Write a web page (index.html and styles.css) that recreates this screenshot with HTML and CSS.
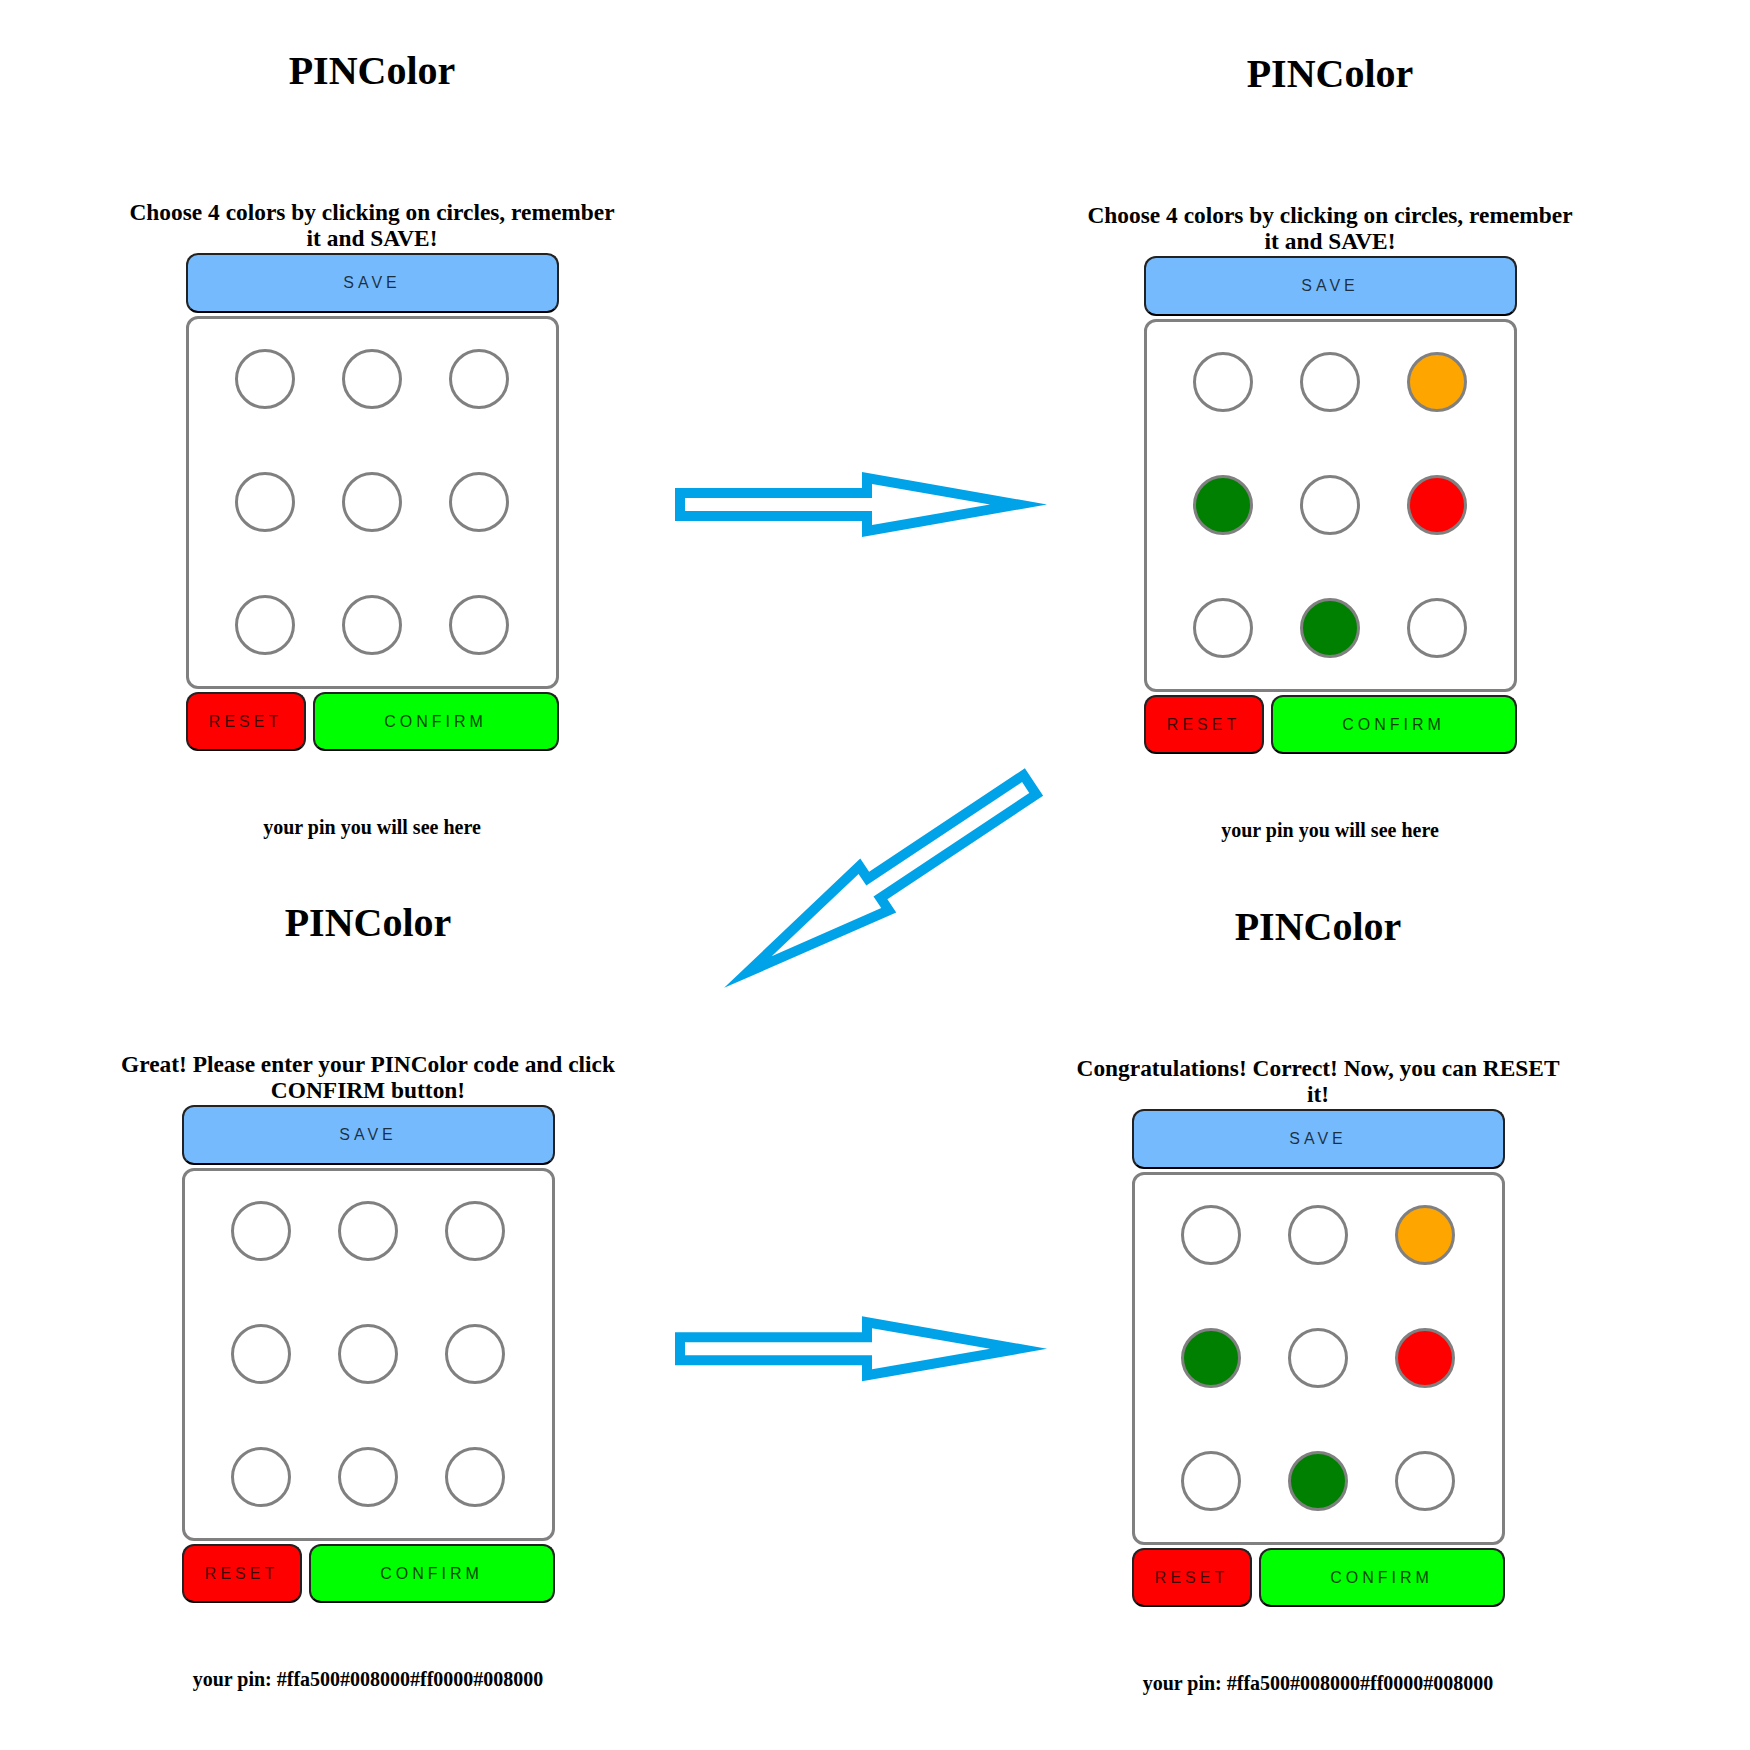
FILE: index.html
```html
<!DOCTYPE html>
<html>
<head>
  <meta charset="utf-8" />
  <title>PINColor</title>
  <link rel="stylesheet" href="styles.css">
</head>
<body>
  <div class="board">
    <div class="panel">
      <h1 class="title">PINColor</h1>
      <h3 class="hint">Choose 4 colors by clicking on circles, remember it and SAVE!</h3>
      <button type="button" class="btn save">SAVE</button>
      <div class="pad">
        <span class="dot"></span><span class="dot"></span><span class="dot"></span>
        <span class="dot"></span><span class="dot"></span><span class="dot"></span>
        <span class="dot"></span><span class="dot"></span><span class="dot"></span>
      </div>
      <div class="controls">
        <button type="button" class="btn reset">RESET</button>
        <button type="button" class="btn confirm">CONFIRM</button>
      </div>
      <p class="pin">your pin you will see here</p>
    </div>

    <div class="panel panel-tr">
      <h1 class="title">PINColor</h1>
      <h3 class="hint">Choose 4 colors by clicking on circles, remember it and SAVE!</h3>
      <button type="button" class="btn save">SAVE</button>
      <div class="pad">
        <span class="dot"></span><span class="dot"></span><span class="dot orange"></span>
        <span class="dot green"></span><span class="dot"></span><span class="dot red"></span>
        <span class="dot"></span><span class="dot green"></span><span class="dot"></span>
      </div>
      <div class="controls">
        <button type="button" class="btn reset">RESET</button>
        <button type="button" class="btn confirm">CONFIRM</button>
      </div>
      <p class="pin">your pin you will see here</p>
    </div>

    <div class="panel panel-bl">
      <h1 class="title">PINColor</h1>
      <h3 class="hint">Great! Please enter your PINColor code and click CONFIRM button!</h3>
      <button type="button" class="btn save">SAVE</button>
      <div class="pad">
        <span class="dot"></span><span class="dot"></span><span class="dot"></span>
        <span class="dot"></span><span class="dot"></span><span class="dot"></span>
        <span class="dot"></span><span class="dot"></span><span class="dot"></span>
      </div>
      <div class="controls">
        <button type="button" class="btn reset">RESET</button>
        <button type="button" class="btn confirm">CONFIRM</button>
      </div>
      <p class="pin">your pin: #ffa500#008000#ff0000#008000</p>
    </div>

    <div class="panel panel-br">
      <h1 class="title">PINColor</h1>
      <h3 class="hint">Congratulations! Correct! Now, you can RESET it!</h3>
      <button type="button" class="btn save">SAVE</button>
      <div class="pad">
        <span class="dot"></span><span class="dot"></span><span class="dot orange"></span>
        <span class="dot green"></span><span class="dot"></span><span class="dot red"></span>
        <span class="dot"></span><span class="dot green"></span><span class="dot"></span>
      </div>
      <div class="controls">
        <button type="button" class="btn reset">RESET</button>
        <button type="button" class="btn confirm">CONFIRM</button>
      </div>
      <p class="pin">your pin: #ffa500#008000#ff0000#008000</p>
    </div>

    <!-- arrows between the steps -->
    <svg class="arrows" width="1750" height="1750" viewBox="0 0 1750 1750">
      <defs>
        <path id="arrow" fill-rule="evenodd"
          d="M0 -16.5 H187 V-32.5 L372 0 L187 32.5 V16.5 H0 Z M10 -6.5 H197 V-20.5 L315 0 L197 20.5 V6.5 H10 Z" />
      </defs>
      <use href="#arrow" transform="translate(675 504.5)" />
      <use href="#arrow" transform="translate(1034 782) rotate(146.4)" />
      <use href="#arrow" transform="translate(675 1348.8)" />
    </svg>
  </div>
</body>
</html>
```

FILE: styles.css
```css
body {
  margin: 0;
  background: #fff;
  color: #000;
  font-family: "Liberation Serif", "Times New Roman", serif;
}
.board {
  position: relative;
  display: grid;
  grid-template-columns: 500px 500px;
  grid-template-rows: 852px auto;
  column-gap: 458px;
  padding-left: 122px;
  min-height: 1750px;
}
.panel {
  width: 500px;
  display: flex;
  flex-direction: column;
  align-items: center;
}
.panel-tr {
  margin-top: 3px;
}
.panel-bl {
  margin-left: -4px;
}
.panel-br {
  margin-left: -12px;
  margin-top: 4px;
}
.title {
  margin: 48px 0 0;
  font-size: 40px;
  line-height: 46px;
  font-weight: bold;
}
.hint {
  margin: 105px 0 2px;
  width: 500px;
  font-size: 23.4px;
  line-height: 26px;
  font-weight: bold;
  text-align: center;
}
.btn {
  box-sizing: border-box;
  height: 59px;
  padding: 0;
  border: 2px solid #222;
  border-bottom-color: #000;
  border-radius: 12px;
  font-family: "Liberation Sans", Arial, sans-serif;
  font-size: 16px;
  letter-spacing: 4px;
  color: rgba(0, 0, 0, 0.75);
  cursor: pointer;
}
.save {
  width: 373px;
  height: 60px;
  background: #75bafc;
}
.pad {
  box-sizing: border-box;
  width: 373px;
  height: 373px;
  margin-top: 3px;
  padding: 30px 0 31px;
  border: 3px solid #808080;
  border-radius: 12px;
  display: grid;
  grid-template-columns: repeat(3, 60px);
  justify-content: space-evenly;
  row-gap: 63px;
}
.dot {
  box-sizing: border-box;
  width: 60px;
  height: 60px;
  border: 3px solid #808080;
  border-radius: 50%;
  background: #fff;
}
.orange {
  background: #ffa500;
}
.green {
  background: #008000;
}
.red {
  background: #ff0000;
}
.controls {
  display: flex;
  gap: 7px;
  width: 373px;
  margin-top: 3px;
}
.reset {
  width: 120px;
  background: #ff0000;
}
.confirm {
  flex: 1;
  background: #00ff00;
}
.pin {
  margin: 65px 0 0;
  font-size: 20px;
  line-height: 23px;
  font-weight: bold;
}
.arrows {
  position: absolute;
  top: 0;
  left: 0;
  fill: #00a2e8;
  pointer-events: none;
}
```
